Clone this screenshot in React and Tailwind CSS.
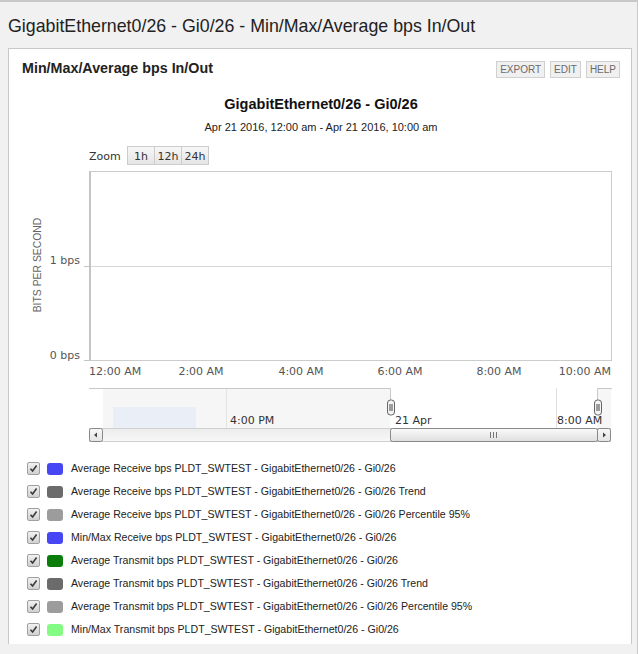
import React from "react";

const legend = [
  { color: "#4646f5", label: "Average Receive bps PLDT_SWTEST - GigabitEthernet0/26 - Gi0/26" },
  { color: "#6b6b6b", label: "Average Receive bps PLDT_SWTEST - GigabitEthernet0/26 - Gi0/26 Trend" },
  { color: "#9c9c9c", label: "Average Receive bps PLDT_SWTEST - GigabitEthernet0/26 - Gi0/26 Percentile 95%" },
  { color: "#4646f5", label: "Min/Max Receive bps PLDT_SWTEST - GigabitEthernet0/26 - Gi0/26" },
  { color: "#0a7d0a", label: "Average Transmit bps PLDT_SWTEST - GigabitEthernet0/26 - Gi0/26" },
  { color: "#6b6b6b", label: "Average Transmit bps PLDT_SWTEST - GigabitEthernet0/26 - Gi0/26 Trend" },
  { color: "#9c9c9c", label: "Average Transmit bps PLDT_SWTEST - GigabitEthernet0/26 - Gi0/26 Percentile 95%" },
  { color: "#84fb84", label: "Min/Max Transmit bps PLDT_SWTEST - GigabitEthernet0/26 - Gi0/26" },
];

const chartFont = "'DejaVu Sans', Verdana, sans-serif";
const arial = "'Liberation Sans', Arial, sans-serif";

function Handle({ x }) {
  return (
    <g>
      <rect x={x} y={311} width={7} height={15} rx={3} fill="#f4f4f4" stroke="#666" strokeWidth={1} />
      <line x1={x + 2.5} y1={315} x2={x + 2.5} y2={322} stroke="#444" strokeWidth={1} />
      <line x1={x + 4.5} y1={315} x2={x + 4.5} y2={322} stroke="#444" strokeWidth={1} />
    </g>
  );
}

function Chart() {
  const xLabels = [
    { t: "12:00 AM", x: 80, a: "start" },
    { t: "2:00 AM", x: 192, a: "middle" },
    { t: "4:00 AM", x: 292, a: "middle" },
    { t: "6:00 AM", x: 391, a: "middle" },
    { t: "8:00 AM", x: 490, a: "middle" },
    { t: "10:00 AM", x: 602, a: "end" },
  ];
  return (
    <svg width="622" height="362" className="block">
      <defs>
        <linearGradient id="btn" x1="0" y1="0" x2="0" y2="1">
          <stop offset="0" stopColor="#f8f8f8" />
          <stop offset="1" stopColor="#e4e4e4" />
        </linearGradient>
        <linearGradient id="thumb" x1="0" y1="0" x2="0" y2="1">
          <stop offset="0" stopColor="#fbfbfb" />
          <stop offset="1" stopColor="#dedede" />
        </linearGradient>
        <linearGradient id="track" x1="0" y1="0" x2="0" y2="1">
          <stop offset="0" stopColor="#ececec" />
          <stop offset="1" stopColor="#f8f8f8" />
        </linearGradient>
      </defs>

      {/* titles */}
      <text x="312" y="20" textAnchor="middle" fontFamily={arial} fontWeight="bold" fontSize="14.5" fill="#111">
        GigabitEthernet0/26 - Gi0/26
      </text>
      <text x="312" y="42" textAnchor="middle" fontFamily={arial} fontSize="11" fill="#222">
        Apr 21 2016, 12:00 am - Apr 21 2016, 10:00 am
      </text>

      {/* zoom buttons */}
      <text x="80" y="71" fontFamily={chartFont} fontSize="11" fill="#333">Zoom</text>
      {[
        { t: "1h", x: 118, w: 27 },
        { t: "12h", x: 145, w: 27 },
        { t: "24h", x: 172, w: 27 },
      ].map((b) => (
        <g key={b.t}>
          <rect x={b.x + 0.5} y={57.5} width={b.w} height={18} fill="url(#btn)" stroke="#cccccc" />
          <text x={b.x + b.w / 2 + 0.5} y={71} textAnchor="middle" fontFamily={chartFont} fontSize="11" fill="#333">
            {b.t}
          </text>
        </g>
      ))}

      {/* plot area */}
      <rect x="80.5" y="82.5" width="522" height="189" fill="#fff" stroke="#cccccc" />
      <line x1="80" y1="177.5" x2="602" y2="177.5" stroke="#d8d8d8" />
      <line x1="81" y1="82" x2="81" y2="272" stroke="#c4c4c4" strokeWidth="2" />
      <line x1="75" y1="177.5" x2="80" y2="177.5" stroke="#c4c4c4" />
      <line x1="75" y1="271.5" x2="80" y2="271.5" stroke="#c4c4c4" />

      <text x="71" y="175" textAnchor="end" fontFamily={chartFont} fontSize="11" fill="#555">1 bps</text>
      <text x="71" y="270" textAnchor="end" fontFamily={chartFont} fontSize="11" fill="#555">0 bps</text>
      <text
        x="29"
        y="176"
        textAnchor="middle"
        fontFamily={arial}
        fontSize="10.4"
        fill="#666"
        transform="rotate(-90 29 176)"
        dominantBaseline="middle"
      >
        BITS PER SECOND
      </text>

      {xLabels.map((l) => (
        <text key={l.t} x={l.x} y="286" textAnchor={l.a} fontFamily={chartFont} fontSize="11" fill="#555">
          {l.t}
        </text>
      ))}

      {/* navigator */}
      <rect x="94" y="299" width="287" height="40" fill="#f6f6f6" />
      <rect x="588" y="299" width="14" height="40" fill="#f6f6f6" />
      <rect x="104" y="318" width="83" height="21" fill="#e9eef7" />
      <line x1="217.5" y1="299" x2="217.5" y2="339" stroke="#e4e4e4" />
      <line x1="547.5" y1="299" x2="547.5" y2="339" stroke="#dedede" />
      <polyline points="80,299.5 381.5,299.5 381.5,311" fill="none" stroke="#c8c8c8" />
      <polyline points="588.5,311 588.5,299.5 603,299.5" fill="none" stroke="#c8c8c8" />

      <text x="221" y="335" fontFamily={chartFont} fontSize="11" fill="#333">4:00 PM</text>
      <text x="386" y="335" fontFamily={chartFont} fontSize="11" fill="#333">21 Apr</text>
      <text x="548" y="335" fontFamily={chartFont} fontSize="11" fill="#333">8:00 AM</text>

      {/* scrollbar */}
      <rect x="80.5" y="339.5" width="521" height="13" fill="url(#track)" stroke="#cfcfcf" />
      <rect x="381.5" y="339.5" width="207" height="13" rx="2" fill="url(#thumb)" stroke="#888" />
      {[481, 484, 487].map((x) => (
        <line key={x} x1={x + 0.5} y1="343" x2={x + 0.5} y2="349" stroke="#777" />
      ))}
      <rect x="80.5" y="339.5" width="13" height="13" rx="2" fill="url(#btn)" stroke="#888" />
      <path d="M 88 343.5 L 85 346 L 88 348.5 Z" fill="#444" />
      <rect x="588.5" y="339.5" width="13" height="13" rx="2" fill="url(#btn)" stroke="#888" />
      <path d="M 594 343.5 L 597 346 L 594 348.5 Z" fill="#444" />

      <Handle x={378.5} />
      <Handle x={585.5} />
    </svg>
  );
}

function Checkbox() {
  return (
    <span className="flex h-[13px] w-[13px] items-center justify-center rounded-[2px] border border-[#a0a0a0] bg-gradient-to-b from-[#f2f2f2] to-[#d0d0d0]">
      <svg width="9" height="9" viewBox="0 0 9 9">
        <path d="M1.5 4.8 L3.6 7 L7.6 1.6" fill="none" stroke="#3a3a3a" strokeWidth="1.6" />
      </svg>
    </span>
  );
}

export default function App() {
  return (
    <div
      className="h-[654px] w-[638px] overflow-hidden border-t-2 border-r border-[#c9c9c9] bg-[#f1f1f1]"
      style={{ fontFamily: arial }}
    >
      <div className="flex h-[46px] items-center pl-[8px] pt-[3px] text-[17.8px] text-[#222]">
        GigabitEthernet0/26 - Gi0/26 - Min/Max/Average bps In/Out
      </div>

      <div className="ml-[8px] h-[596px] w-[624px] border-x border-t border-[#c8c8c8] bg-white">
        <div className="flex h-[40px] items-center justify-between pl-[13px] pr-[11px]">
          <h3 className="text-[14.3px] font-bold text-[#222]">Min/Max/Average bps In/Out</h3>
          <div className="flex gap-[5px]">
            {["EXPORT", "EDIT", "HELP"].map((b) => (
              <button
                key={b}
                className="h-[17px] border border-[#d0d0d0] bg-[#f0f0f0] px-[3px] text-[10px] leading-[15px] text-[#6a6a6a]"
              >
                {b}
              </button>
            ))}
          </div>
        </div>

        <Chart />

        <div className="mt-[6px] flex flex-col">
          {legend.map((item, i) => (
            <div key={i} className="flex h-[23px] items-center pl-[18px]">
              <Checkbox />
              <span
                className="ml-[7px] h-[12px] w-[16px] rounded-[3px]"
                style={{ backgroundColor: item.color }}
              />
              <span className="ml-[8px] text-[10.6px] text-[#222]">{item.label}</span>
            </div>
          ))}
        </div>
      </div>
    </div>
  );
}
